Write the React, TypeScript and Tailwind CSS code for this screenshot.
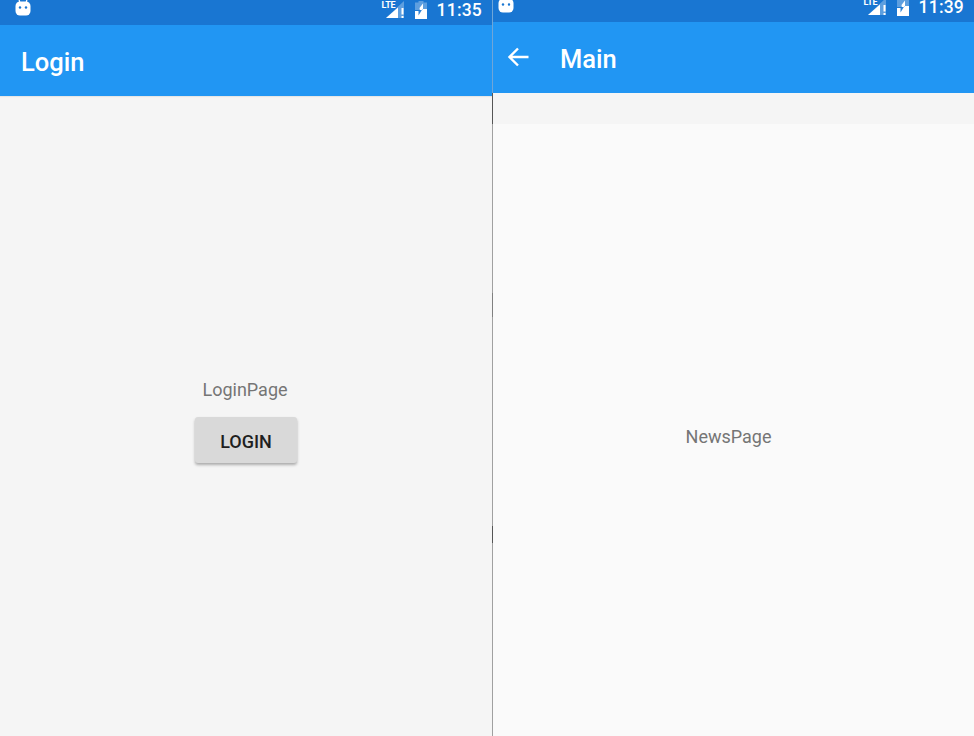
const RobotIcon = () => (
  <svg width="16" height="17" viewBox="0 0 16 17" fill="none">
    <path d="M4 0.5 L5 4 M12 0.5 L11 4" stroke="#fff" strokeWidth="1.2" />
    <rect x="0.5" y="2.5" width="15" height="14" rx="4.5" fill="#fff" />
    <circle cx="5" cy="8.5" r="1.2" fill="#1976D2" />
    <circle cx="11" cy="8.5" r="1.2" fill="#1976D2" />
  </svg>
);

const SignalIcon = () => (
  <svg width="25" height="20" viewBox="0 0 25 20" fill="none">
    <polygon points="22,1 22,18 4,18" fill="#fff" fillOpacity="0.3" />
    <polygon points="16,7.5 16,18 4,18" fill="#fff" />
    <rect x="19.5" y="8" width="2" height="6.5" fill="#fff" />
    <rect x="19.5" y="16" width="2" height="2" fill="#fff" />
  </svg>
);

const BatteryIcon = () => (
  <svg width="12" height="18" viewBox="0 0 12 18" fill="none">
    <path d="M3.5 0 H8.5 V1.5 H12 V18 H0 V1.5 H3.5 Z" fill="#fff" fillOpacity="0.3" />
    <path d="M0 10 H5 L4.5 7 L8 2.5 V8 H12 V18 H0 Z M0 18" fill="#fff" />
    <path d="M7.5 8 L3.5 14.5 V10 H0 V9 H7.5 Z" fill="#1976D2" fillOpacity="0.9" />
  </svg>
);

const StatusBar = ({ time, height, robotClass, iconsClass }: { time: string; height: string; robotClass: string; iconsClass: string }) => (
  <div className={`flex items-start justify-between bg-[#1976D2] overflow-hidden shrink-0 ${height}`}>
    <div className={robotClass}>
      <RobotIcon />
    </div>
    <div className={`flex items-start pr-[10px] ${iconsClass}`}>
      <div className="relative w-[25px] h-[20px] mr-[8px]">
        <span className="absolute left-0 top-[1px] text-[9px] leading-[8px] font-bold text-white tracking-tight">LTE</span>
        <SignalIcon />
      </div>
      <div className="mt-[1px] mr-[10px]">
        <BatteryIcon />
      </div>
      <span className="mt-[3px] text-[17.5px] leading-[15px] font-medium tracking-[0.2px] text-white">{time}</span>
    </div>
  </div>
);

export default function App() {
  return (
    <div className="flex h-[736px] w-[974px] overflow-hidden font-['Roboto',sans-serif]">
      <div className="flex flex-col w-[492px] bg-[#F5F5F5]">
        <StatusBar time="11:35" height="h-[25px]" robotClass="ml-[15px] -mt-[1px]" iconsClass="" />
        <div className="flex items-center h-[71px] pl-[21px] pt-[3px] bg-[#2196F3] shrink-0 shadow-[0_1px_1px_rgba(0,0,0,0.06)]">
          <span className="text-[25.5px] font-medium text-white">Login</span>
        </div>
        <div className="flex flex-col flex-1 items-center pt-[283px]">
          <span className="text-[18px] leading-[22px] text-[#757575] mr-[2px]">LoginPage</span>
          <button className="flex items-center justify-center pt-[2px] mt-[16px] w-[102px] h-[46px] rounded-[3px] bg-[#D9D9D9] text-[18px] font-medium text-[#1f1f1f] shadow-[0_2px_3px_rgba(0,0,0,0.3)]">
            LOGIN
          </button>
        </div>
      </div>
      <div className="flex flex-col w-px shrink-0 bg-[#A0A0A0]">
        <div className="h-[93px] bg-[#6FA6D8]" />
        <div className="h-[31px] bg-[#555555]" />
        <div className="h-[169px]" />
        <div className="h-[24px] bg-[#808080]" />
        <div className="h-[209px]" />
        <div className="h-[17px] bg-[#555555]" />
      </div>
      <div className="flex flex-col flex-1">
        <StatusBar time="11:39" height="h-[22px]" robotClass="ml-[5px] -mt-[4px]" iconsClass="-mt-[3px]" />
        <div className="flex items-center h-[71px] pl-[13px] bg-[#2196F3] shrink-0">
          <svg width="24" height="24" viewBox="0 0 24 24" fill="none" className="-mt-[2px]" stroke="#fff" strokeWidth="2.4">
            <path d="M22.5 12 H3.5 M12 3.5 L3.5 12 L12 20.5" />
          </svg>
          <span className="ml-[30px] pt-[3px] text-[25.5px] font-medium text-white">Main</span>
        </div>
        <div className="h-[31px] bg-[#F5F5F5] shrink-0" />
        <div className="flex flex-1 items-start justify-center bg-[#FAFAFA] pt-[302px] pr-[10px]">
          <span className="text-[18px] leading-[22px] text-[#757575]">NewsPage</span>
        </div>
      </div>
    </div>
  );
}
